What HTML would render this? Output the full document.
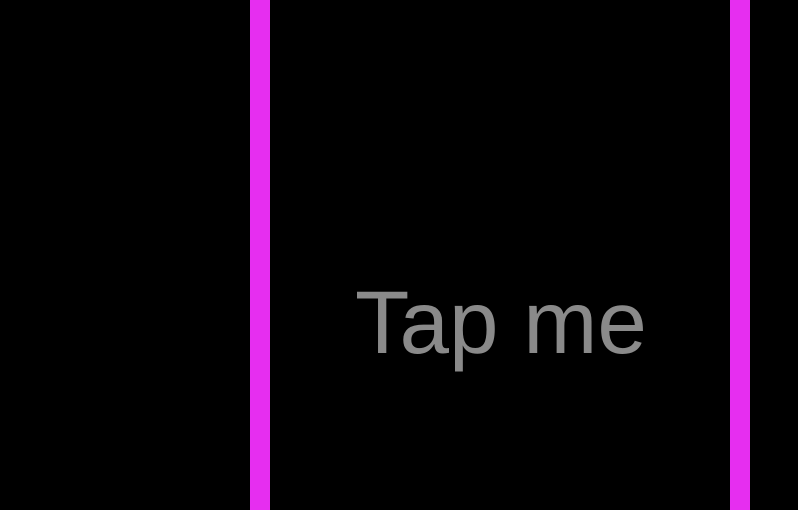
<!DOCTYPE html>
<html><head><style>
html,body{margin:0;padding:0;background:#000;width:798px;height:510px;overflow:hidden;position:relative}
.bar{position:absolute;top:0;width:20px;height:510px;background:#e62ef0}
.t{position:absolute;left:355px;top:322px;font-family:"Liberation Sans",sans-serif;font-size:89px;color:#8a8a8a;line-height:0;white-space:nowrap}
</style></head><body>
<div class="bar" style="left:250px"></div>
<div class="bar" style="left:730px"></div>
<div class="t">Tap me</div>
</body></html>
